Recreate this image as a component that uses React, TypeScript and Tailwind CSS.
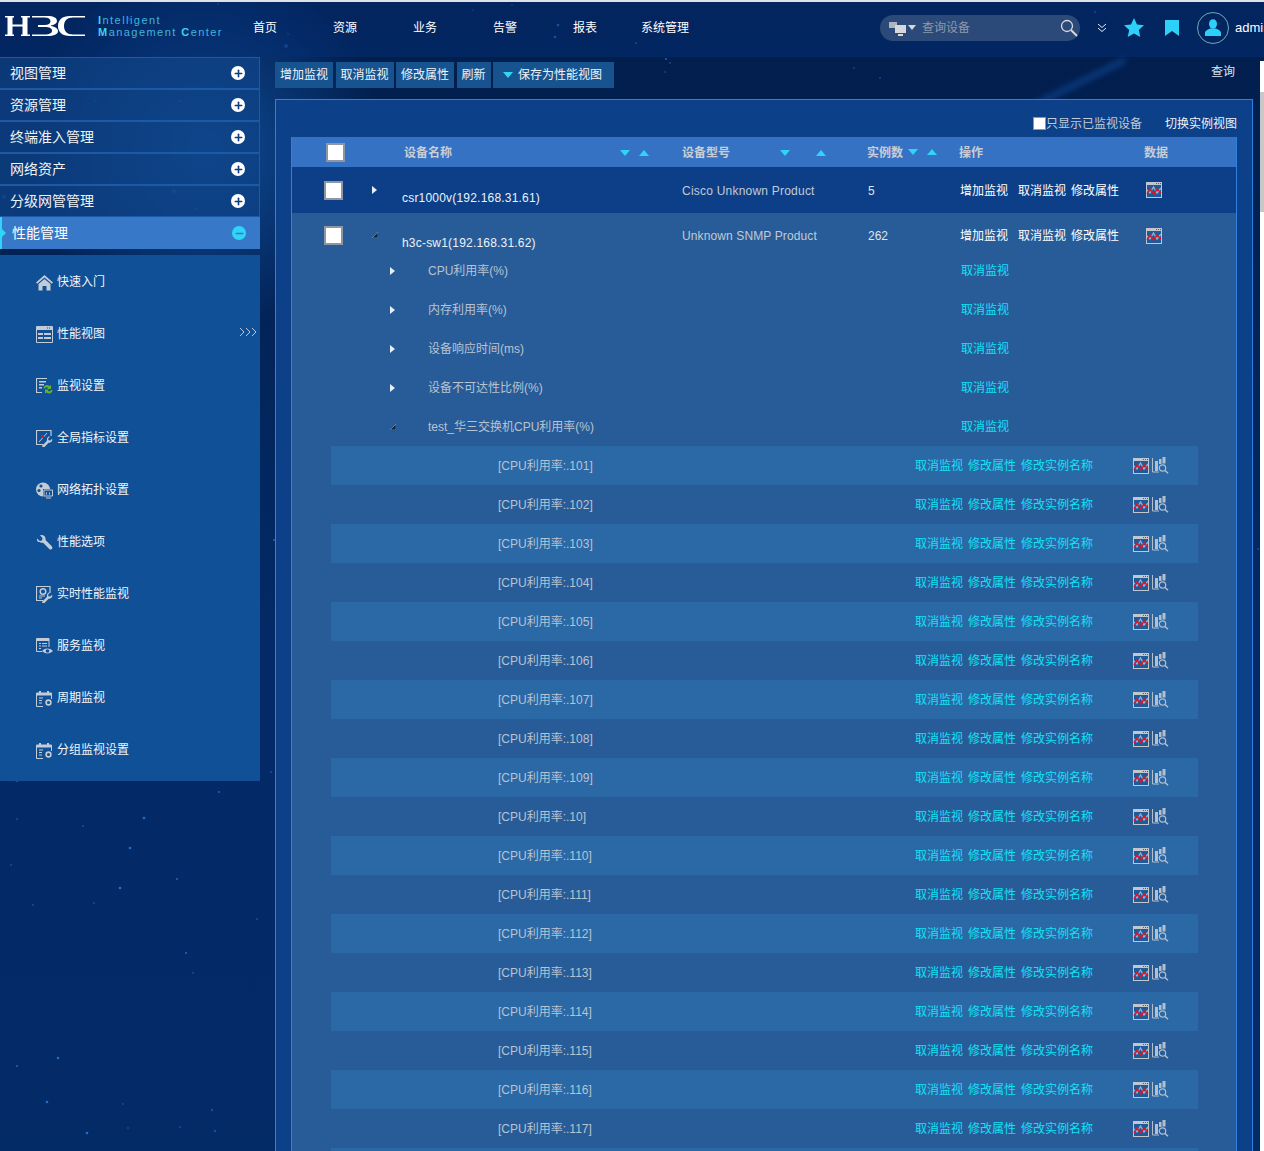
import React from 'react';
import { Minus, Plus } from 'lucide-react';

const FONT = "font-['Liberation_Sans','Noto_Sans_CJK_SC',sans-serif]";

const topMenus = ['视图管理', '资源管理', '终端准入管理', '网络资产', '分级网管管理'];
const navItems = ['首页', '资源', '业务', '告警', '报表', '系统管理'];
const metrics = ['CPU利用率(%)', '内存利用率(%)', '设备响应时间(ms)', '设备不可达性比例(%)'];
const instances = ['101', '102', '103', '104', '105', '106', '107', '108', '109', '10', '110', '111', '112', '113', '114', '115', '116', '117'];

// star field: fixed pseudo random points so every render is the same
const stars = Array.from({ length: 300 }, (_, i) => ({
  x: (i * 197 + (i * i * 13) % 89) % 1264,
  y: (i * 331 + (i * i * 7) % 113) % 1151,
  r: i % 7 === 0 ? 2 : i % 3 === 0 ? 1.3 : 0.9,
  o: i % 5 === 0 ? 0.8 : 0.45,
}));

const Caret = ({ up, className = '' }: { up?: boolean; className?: string }) => (
  <svg width="10" height="6" viewBox="0 0 10 6" className={className}>
    <path d={up ? 'M0 6 5 0l5 6z' : 'M0 0h10L5 6z'} fill="#2fd4f7" />
  </svg>
);

const Logo = () => (
  <svg width="80" height="20" viewBox="0 0 80 20" fill="#fff" className="shrink-0">
    <path d="M0 0h9v1.500H7.500v7h10v-7H16V0h9v1.500h-2.500v17H25V20h-9v-1.500h1.500v-8h-10v8H9V20H0v-1.500h2.500v-17H0z" />
    <path d="M27 0h15c7 0 10 2 10 5 0 2.300-2 3.800-6 4.500v.5c4 .7 7 2.300 7 5 0 3.300-4 5-11 5H27v-1.500h13c4 0 7-1.200 7-3.800 0-2.400-2.500-3.700-7-3.700h-7V9h6.500c4 0 6-1.300 6-3.700 0-2.300-2-3.800-6-3.800H27z" />
    <path d="M80 1.500H68c-6 0-9 3.200-9 8.500s3 8.500 9 8.500h12V20H65C57 20 53 16 53 10S57 0 65 0h15z" />
  </svg>
);

const PanelIcon = ({ children }: { children: React.ReactNode }) => (
  <svg width="17" height="17" viewBox="0 0 17 17" fill="none" className="shrink-0">
    {children}
  </svg>
);

const Gear = ({ x, y }: { x: number; y: number }) => (
  <>
    <circle cx={x} cy={y} r="3.600" fill="#0f5096" />
    <circle cx={x} cy={y} r="2.400" fill="none" stroke="#c3cbd6" strokeWidth="1.600" />
  </>
);

const Wrench = ({ x = 0, y = 0, s = 1 }: { x?: number; y?: number; s?: number }) => (
  <path
    transform={`translate(${x} ${y}) scale(${s})`}
    d="M1 4.500 3.800 7 6 6.500 6.500 4 4 1.300C6.500.4 9.500 1.800 9.600 5c0 .6 0 1 .2 1.300l6 6c.8.9.8 1.800.1 2.600-.8.800-1.800.800-2.600 0l-6-6c-.4-.2-1-.2-1.400-.2C2.500 8.800.3 7 1 4.500z"
    fill="#c3cbd6"
  />
);

const Window = () => (
  <>
    <path d="M.5.500h16v16H.5z" stroke="#c3cbd6" />
    <path d="M1 1h15v3H1z" fill="#c3cbd6" />
    <path d="M11 2h1M13 2h1" stroke="#0f5096" />
  </>
);

function CalendarIcon() {
  return (
    <PanelIcon>
      <path d="M7 16.500H.5V3h15v6" stroke="#c3cbd6" />
      <path d="M1 3h14v2.500H1zM3 1h2v3H3zM11 1h2v3h-2z" fill="#c3cbd6" />
      <path d="M3 8h4M3 10.500h3M3 13h3" stroke="#c3cbd6" />
      <Gear x={12.500} y={12.500} />
    </PanelIcon>
  );
}

const subMenus: { label: string; icon: React.ReactNode; more?: boolean }[] = [
  {
    label: '快速入门',
    icon: (
      <PanelIcon>
        <path d="M8.500 1 0 8.500l1.200 1.300 7.300-6.300 7.300 6.300L17 8.500z" fill="#c3cbd6" />
        <path d="M2.500 10 8.500 5l6 5v6.500h-4V12h-4v4.500h-4z" fill="#c3cbd6" />
      </PanelIcon>
    ),
  },
  {
    label: '性能视图',
    more: true,
    icon: (
      <PanelIcon>
        <Window />
        <path d="M2 7h5v2H2zM8 7h7v2H8zM2 11h5v2H2zM8 11h7v2H8z" fill="#c3cbd6" />
      </PanelIcon>
    ),
  },
  {
    label: '监视设置',
    icon: (
      <PanelIcon>
        <path d="M11 .500H.5v14H6" stroke="#c3cbd6" strokeWidth="1.200" />
        <path d="M3 3h7v1.500H3zM3 6h5v1.500H3zM3 9h3v1.500H3z" fill="#c3cbd6" />
        <path d="M7.500 10.500c0-3 3.500-4.500 6-2.500L15 7v4h-4l1.300-1.200c-1.300-1-2.800-.6-3.300.7z" fill="#62b32f" />
        <path d="M16.500 12c0 3-3.500 4.500-6 2.500L9 15.500v-4h4l-1.300 1.200c1.300 1 2.800.6 3.300-.7z" fill="#62b32f" />
      </PanelIcon>
    ),
  },
  {
    label: '全局指标设置',
    icon: (
      <PanelIcon>
        <path d="M15 6V.5H.5v14H7" stroke="#c3cbd6" strokeWidth="1.200" />
        <path d="M3 12 11 3" stroke="#c3cbd6" />
        <rect x="5" y="5" width="3" height="3" fill="#e8111e" />
        <g transform="matrix(0 .7 -.7 0 17 6)">
          <Wrench />
        </g>
      </PanelIcon>
    ),
  },
  {
    label: '网络拓扑设置',
    icon: (
      <PanelIcon>
        <circle cx="7" cy="7.500" r="7" fill="#c3cbd6" />
        <circle cx="5" cy="4" r="1.600" fill="#0f5096" />
        <circle cx="3" cy="8.500" r="1.600" fill="#0f5096" />
        <path d="M7 7h10v7.500H7z" fill="#0f5096" />
        <path d="M8 8h8.500v6H8zM10 16h5" stroke="#c3cbd6" />
        <path d="M10.500 10.500v2M13.500 10.500v2" stroke="#c3cbd6" />
      </PanelIcon>
    ),
  },
  {
    label: '性能选项',
    icon: (
      <PanelIcon>
        <Wrench />
      </PanelIcon>
    ),
  },
  {
    label: '实时性能监视',
    icon: (
      <PanelIcon>
        <path d="M14 7V.5H.5v14H7" stroke="#c3cbd6" strokeWidth="1.200" />
        <circle cx="7" cy="5.500" r="2.800" stroke="#c3cbd6" strokeWidth="1.500" />
        <path d="M3 10h6M3 12h3" stroke="#c3cbd6" />
        <g transform="matrix(0 .7 -.7 0 17 6)">
          <Wrench />
        </g>
      </PanelIcon>
    ),
  },
  {
    label: '服务监视',
    icon: (
      <PanelIcon>
        <path d="M13 9V.5H.5v13H6" stroke="#c3cbd6" />
        <path d="M1 1h12v2H1z" fill="#c3cbd6" />
        <path d="M3 5.500h2M6 5.500h5M3 8h2M6 8h5M3 10.500h2" stroke="#c3cbd6" />
        <path d="M6 13c2.800-3.300 8-3.300 11 0-3 3.300-8.200 3.300-11 0z" fill="#c3cbd6" />
        <circle cx="11.500" cy="13" r="1.800" fill="#0f5096" />
      </PanelIcon>
    ),
  },
  { label: '周期监视', icon: <CalendarIcon /> },
  { label: '分组监视设置', icon: <CalendarIcon /> },
];

const ChartIcon = () => (
  <svg width="16" height="16" viewBox="0 0 16 16" className="shrink-0">
    <path d="M0 0h16v16H0z" fill="#c2c7ce" />
    <path d="M1 3h14v12H1z" fill="#1f5b9b" />
    <path d="M1 8l3 3 3.500-6L11 11l4-5" fill="none" stroke="#8db8dc" strokeWidth="1.300" />
    <path d="M1 12l3-5 4 5 3-5 4 4" fill="none" stroke="#e8111e" strokeWidth="1.400" />
    <path d="M10 1.500h1M12 1.500h1M14 1.500h1" stroke="#5b6168" />
  </svg>
);

const BarsSearchIcon = () => (
  <svg width="17" height="17" viewBox="0 0 17 17" className="shrink-0" fill="none">
    <path d="M.5 1v14H7" stroke="#b4bfcd" />
    <path d="M3 4h3v10H3zM7 2h2.500v5H7zM10.500 0h3v6.500h-3z" fill="#b4bfcd" />
    <circle cx="10.500" cy="11" r="3.200" stroke="#b4bfcd" strokeWidth="1.200" />
    <path d="m13 13.500 3 2.800" stroke="#b4bfcd" strokeWidth="1.500" />
  </svg>
);

const Checkbox = ({ className = '' }: { className?: string }) => (
  <span className={`block h-[19px] w-[19px] border-2 border-[#8d96a3] bg-white ${className}`} />
);

const RightTriangle = () => (
  <svg width="5" height="8" viewBox="0 0 5 8" className="shrink-0">
    <path d="M0 0v8l5-4z" fill="#e8eef5" />
  </svg>
);

const OpenTriangle = () => (
  <svg width="6" height="6" viewBox="0 0 6 6" className="shrink-0">
    <path d="M6 0v6H0z" fill="#1b2430" stroke="#a8b2bf" strokeWidth="0.500" />
  </svg>
);

const DeviceRow = ({ name, model, count, open }: { name: string; model: string; count: string; open?: boolean }) => (
  <div className={`flex h-[46px] text-[#eef2f7] ${open ? '' : 'bg-[#0c3f87]'}`}>
    <div className={`w-[80px] pl-[32px] ${open ? 'pt-[13px]' : 'pt-[14px]'}`}>
      <Checkbox />
    </div>
    <div className={`flex w-[30px] ${open ? 'pt-[18px]' : 'pt-[19px]'}`}>
      <span className="flex h-[8px] items-center">{open ? <OpenTriangle /> : <RightTriangle />}</span>
    </div>
    <div className={`w-[280px] text-[12px] leading-[16px] tracking-[0.2px] ${open ? 'pt-[22px]' : 'pt-[23px]'}`}>{name}</div>
    <div className={`w-[186px] text-[12px] leading-[16px] text-[#c2cad5] ${open ? 'pt-[15px] tracking-[0.12px]' : 'pt-[16px] tracking-[0.22px]'}`}>{model}</div>
    <div className={`w-[92px] text-[12px] leading-[16px] text-[#dfe5ec] ${open ? 'pt-[15px]' : 'pt-[16px]'}`}>{count}</div>
    <div className={`flex w-[186px] gap-[10px] text-[12px] leading-[16px] text-white ${open ? 'pt-[15px]' : 'pt-[16px]'}`}>
      <span>增加监视</span>
      <span className="-mr-[5px]">取消监视</span>
      <span>修改属性</span>
    </div>
    <div className="pt-[15px]">
      <ChartIcon />
    </div>
  </div>
);

export default function App() {
  return (
    <div className={`relative h-[1151px] w-full overflow-hidden bg-[#03255a] ${FONT}`}>
      {/* page background: stars and glow */}
      <div className="absolute inset-0 bg-[linear-gradient(180deg,#011d4b_0%,#032a66_55%,#032b66_100%)]" />
      <div className="absolute inset-0 bg-[radial-gradient(circle_at_205px_148px,rgba(26,110,205,0.55),transparent_180px)]" />
      <svg className="absolute inset-0" width="1264" height="1151">
        {stars.map((s, i) => (
          <circle key={i} cx={s.x} cy={s.y} r={s.r} fill="#2e7ee0" opacity={s.o} />
        ))}
        <path d="M1020 112 1125 60" stroke="#1c62c4" strokeWidth="5" opacity="0.5" className="blur-[3px]" />
      </svg>

      <div className="relative flex h-full flex-col border-t-2 border-[#dfe3e8]">
        {/* top bar */}
        <header className="flex h-[55px] shrink-0 items-center bg-[#04307a]/45 pb-[4px]">
          <div className="flex w-[225px] shrink-0 items-center pl-[5px]">
            <div className="mb-[3px]">
              <Logo />
            </div>
            <div className="mb-[4px] ml-[13px] whitespace-nowrap font-['Liberation_Sans',sans-serif] text-[11px] leading-[12px] tracking-[1.45px] text-[#43b4dc]">
              <div>
                <b className="font-bold text-[#3fd0ef]">I</b>ntelligent
              </div>
              <div>
                <b className="font-bold text-[#3fd0ef]">M</b>anagement <b className="font-bold text-[#3fd0ef]">C</b>enter
              </div>
            </div>
          </div>
          <nav className="flex shrink-0">
            {navItems.map((item) => (
              <span key={item} className="w-[80px] text-center text-[12px] text-white">
                {item}
              </span>
            ))}
          </nav>
          <div className="ml-[175px] flex h-[26px] w-[200px] shrink-0 items-center rounded-[13px] bg-[#2c4a79] pl-[9px] pr-[2px]">
            <svg width="18" height="16" viewBox="0 0 18 16" className="shrink-0">
              <path d="M0 2h8v6H0z" fill="#aeb4bc" />
              <path d="M6 5h11v8H6z" fill="#d5d8dc" />
              <path d="M9 14h5v2H9z" fill="#d5d8dc" />
            </svg>
            <svg width="8" height="5" viewBox="0 0 8 5" className="ml-[1px] shrink-0">
              <path d="M0 0h8L4 5z" fill="#d5d8dc" />
            </svg>
            <span className="ml-[6px] text-[12px] text-[#8d99ac]">查询设备</span>
            <svg width="18" height="18" viewBox="0 0 18 18" fill="none" className="ml-auto shrink-0">
              <circle cx="7" cy="7" r="5.500" stroke="#d5d8dc" strokeWidth="1.300" />
              <path d="m11 11 6 6" stroke="#d5d8dc" strokeWidth="2" />
            </svg>
          </div>
          <svg width="10" height="10" viewBox="0 0 10 10" fill="none" className="ml-[17px] shrink-0">
            <path d="m1 1 4 3.500L9 1M1 5l4 3.500L9 5" stroke="#e6ebf2" />
          </svg>
          <svg width="20" height="19" viewBox="0 0 20 19" className="ml-[17px] shrink-0">
            <path d="m10 0 3 6.500 7 .8-5.200 4.700 1.500 7L10 15.500 3.700 19l1.500-7L0 7.300l7-.8z" fill="#2dd0f6" />
          </svg>
          <svg width="14" height="16" viewBox="0 0 14 16" className="ml-[21px] shrink-0">
            <path d="M0 0h14v16L7 11l-7 5z" fill="#2dd0f6" />
          </svg>
          <div className="ml-[18px] flex h-[32px] w-[32px] shrink-0 items-center justify-center rounded-full border border-[#6fa9b5]">
            <svg width="16" height="17" viewBox="0 0 16 17">
              <ellipse cx="8" cy="5" rx="4" ry="4.800" fill="#2dd0f6" />
              <path d="M0 17v-3c0-2.500 3-3.500 5-4.500h6c2 1 5 2 5 4.500v3z" fill="#2dd0f6" />
            </svg>
          </div>
          <span className="ml-[6px] text-[13px] text-white">admin</span>
        </header>

        <div className="flex min-h-0 flex-1">
          {/* left menu */}
          <aside className="w-[260px] shrink-0">
            {topMenus.map((menu) => (
              <div
                key={menu}
                className="flex h-[32px] items-center justify-between border border-l-0 border-[#1b5ba6] bg-[#0f4387]/75 pl-[10px] pr-[14px] text-[14px] text-[#f0f3f7]"
              >
                <span>{menu}</span>
                <span className="flex h-[14px] w-[14px] items-center justify-center rounded-full bg-white">
                  <Plus size={11} strokeWidth={3.500} color="#0d3f80" />
                </span>
              </div>
            ))}
            <div className="relative flex h-[32px] items-center justify-between bg-[#3878c8] pl-[12px] pr-[14px] text-[14px] text-white">
              <span className="absolute left-0 top-0 h-full w-[2px] bg-[#2fd4f7]" />
              <span className="absolute left-[2px] top-[12px] h-0 w-0 border-y-[4px] border-l-[4px] border-y-transparent border-l-[#2fd4f7]" />
              <span>性能管理</span>
              <span className="flex h-[14px] w-[14px] items-center justify-center rounded-full bg-[#2fd4f7]">
                <Minus size={11} strokeWidth={3.500} color="#3878c8" />
              </span>
            </div>
            <div className="mt-[6px] h-[526px] bg-[#0f5096] pt-[1px]">
              {subMenus.map((item) => (
                <div key={item.label} className="relative flex h-[52px] items-center pl-[36px] text-[12px] text-[#f2f5f9]">
                  {item.icon}
                  <span className="ml-[4px]">{item.label}</span>
                  {item.more && (
                    <svg width="18" height="10" viewBox="0 0 18 10" fill="none" className="absolute right-[3px] top-[19px]">
                      <path d="m1 1 4 4-4 4M7 1l4 4-4 4M13 1l4 4-4 4" stroke="#b8c7dc" />
                    </svg>
                  )}
                </div>
              ))}
            </div>
          </aside>

          {/* content */}
          <main className="min-w-0 flex-1 pl-[15px] pr-[7px] text-[12px]">
            <div className="mt-[5px] flex h-[26px] items-start justify-between">
              <div className="flex gap-[2.5px] text-[#f0f3f7]">
                {['增加监视', '取消监视', '修改属性', '刷新'].map((label) => (
                  <span key={label} className="flex h-[26px] items-center bg-[#17548f] px-[5px]">
                    {label}
                  </span>
                ))}
                <span className="flex h-[26px] w-[121px] items-center gap-[5px] bg-[#17548f] pl-[10px]">
                  <Caret />
                  保存为性能视图
                </span>
              </div>
              <span className="mr-[18px] mt-[1px] text-[#dfe5ec]">查询</span>
            </div>

            <section className="mt-[11px] h-[1100px] border border-[#2f7fde] bg-[#0c4189] px-[15px] pt-[16px]">
              <div className="flex h-[21px] items-center justify-end pb-[6px] text-[#c2cad5]">
                <span className="h-[13px] w-[13px] border border-[#8d96a3] bg-white" />
                只显示已监视设备
                <span className="ml-[23px] text-[#f0f3f7]">切换实例视图</span>
              </div>
              <div className="border-x border-[#2f7fde]">
                <div className="flex h-[30px] items-center bg-[#3672c4] pt-[2px] font-bold text-[#c9ced6]">
                  <span className="w-[112px] -translate-y-[1px] pl-[34px]">
                    <Checkbox />
                  </span>
                  <span className="w-[216px]">设备名称</span>
                  <span className="flex w-[62px] items-center gap-[9px]">
                    <Caret />
                    <Caret up />
                  </span>
                  <span className="w-[98px]">设备型号</span>
                  <span className="flex w-[87px] items-center gap-[26px]">
                    <Caret />
                    <Caret up />
                  </span>
                  <span className="w-[92px]">
                    <span className="inline-flex items-center">
                      实例数
                      <Caret className="-mt-[2px] ml-[5px]" />
                      <Caret up className="-mt-[2px] ml-[9px]" />
                    </span>
                  </span>
                  <span className="w-[185px]">操作</span>
                  <span>数据</span>
                </div>
                <DeviceRow name="csr1000v(192.168.31.61)" model="Cisco Unknown Product" count="5" />
                <div className="bg-[#285c98]">
                  <DeviceRow name="h3c-sw1(192.168.31.62)" model="Unknown SNMP Product" count="262" open />
                  <div className="-mt-[6px]">
                    {metrics.map((metric) => (
                      <div key={metric} className="flex h-[39px] items-center pl-[98px] text-[#b8c3d1]">
                        <span className="-translate-y-[2px]">
                          <RightTriangle />
                        </span>
                        <span className="ml-[33px] w-[533px] -translate-y-[2px]">{metric}</span>
                        <span className="-translate-y-[2px] text-[#12e2f5]">取消监视</span>
                      </div>
                    ))}
                    <div className="flex h-[39px] items-center pl-[98px] text-[#b8c3d1]">
                      <span className="-translate-y-[2px]">
                        <OpenTriangle />
                      </span>
                      <span className="ml-[32px] w-[533px] -translate-y-[2px]">test_华三交换机CPU利用率(%)</span>
                      <span className="-translate-y-[2px] text-[#12e2f5]">取消监视</span>
                    </div>
                  </div>
                  <div className="ml-[39px] mr-[38px] -mt-[2px]">
                    {instances.map((inst, i) => (
                      <div
                        key={inst}
                        className={`flex h-[39px] items-center text-[#b8c3d1] ${i % 2 === 0 ? 'bg-[#2b68a6]' : ''}`}
                      >
                        <span className="ml-[167px] w-[417px]">[CPU利用率:.{inst}]</span>
                        <span className="flex w-[218px] gap-[5px] text-[#12e2f5]">
                          <span>取消监视</span>
                          <span>修改属性</span>
                          <span>修改实例名称</span>
                        </span>
                        <ChartIcon />
                        <span className="ml-[3px]">
                          <BarsSearchIcon />
                        </span>
                      </div>
                    ))}
                  </div>
                  <div className="ml-[39px] mr-[38px] h-[39px] bg-[#2b68a6]" />
                </div>
              </div>
            </section>
          </main>

          {/* page scrollbar */}
          <div className="mt-[4px] w-[4px] shrink-0 bg-white pt-[31px]">
            <div className="h-[120px] bg-[#c8c8c8]" />
          </div>
        </div>
      </div>
    </div>
  );
}
